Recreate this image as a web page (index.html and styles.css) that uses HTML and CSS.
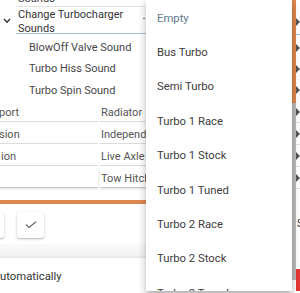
FILE: index.html
```html
<!DOCTYPE html>
<html>
<head>
<meta charset="utf-8">
<link rel="stylesheet" href="styles.css">
</head>
<body>
<div class="app">
  <div class="main">
    <div class="tree">
      <div class="prev">Sounds</div>
      <div class="group">
        <div class="chev"><svg width="8" height="6" viewBox="0 0 8 6"><polyline points="1,1 4,4.2 7,1" fill="none" stroke="#333" stroke-width="1.4"/></svg></div>
        <div class="glabel"><span class="gtext">Change Turbocharger<br>Sounds</span><span class="gdot"></span></div>
      </div>
      <div class="children">
        <div class="child">BlowOff Valve Sound</div>
        <div class="child">Turbo Hiss Sound</div>
        <div class="child">Turbo Spin Sound</div>
      </div>
    </div>
    <div class="table">
      <div class="cell c1">port</div><div class="cell c2">Radiator</div>
      <div class="cell c1">sion</div><div class="cell c2">Independent</div>
      <div class="cell c1 c1b">ion</div><div class="cell c2">Live Axle</div>
      <div class="cell c1"></div><div class="cell c2">Tow Hitch</div>
    </div>
    <div class="obar"></div>
    <div class="btns">
      <div class="btn"></div>
      <div class="btn"><svg width="12" height="8" viewBox="0 0 12 8"><polyline points="1,3.5 4,6.5 11,0.8" fill="none" stroke="#666" stroke-width="1.1"/></svg></div>
    </div>
    <div class="band"></div>
    <div class="auto">utomatically</div>
  </div>
  <div class="vbar"><div class="vtop"></div><div class="vbot"></div></div>
  <div class="strip">
    <div class="s-top"></div>
    <div class="s-group"><span class="tri"></span></div>
    <div class="s-gap"></div>
    <div class="s-child"><span class="tri"></span></div>
    <div class="s-child"><span class="tri"></span></div>
    <div class="s-child"><span class="tri"></span></div>
    <div class="s-tab"><span class="tri"></span></div>
    <div class="s-tab"><span class="tri"></span></div>
    <div class="s-tab"><span class="tri"></span></div>
    <div class="s-tab"><span class="tri"></span></div>
    <div class="s-letter">S</div>
    <div class="s-red"></div>
  </div>
</div>
<div class="menu">
  <div class="item empty">Empty</div>
  <div class="item">Bus Turbo</div>
  <div class="item">Semi Turbo</div>
  <div class="item">Turbo 1 Race</div>
  <div class="item">Turbo 1 Stock</div>
  <div class="item">Turbo 1 Tuned</div>
  <div class="item">Turbo 2 Race</div>
  <div class="item">Turbo 2 Stock</div>
  <div class="item">Turbo 2 Tuned</div>
</div>
</body>
</html>
```
FILE: styles.css
```css
* { box-sizing: border-box; margin: 0; padding: 0; }
html, body { width: 300px; height: 293px; overflow: hidden; background: #fff; }
body { font-family: Roboto, "Noto Sans", sans-serif; color: #444; position: relative; }

.app { display: flex; height: 293px; }
.main { width: 292px; flex: none; display: flex; flex-direction: column; }

.tree { font-size: 11px; }
.prev { margin-top: -14px; height: 21px; padding-top: 6px; line-height: 14px; margin-left: 16px; padding-left: 2px; border-bottom: 1px solid #e2e2e2; color: #444; }
.group { display: flex; height: 27px; }
.chev { width: 16px; flex: none; display: flex; align-items: center; padding-left: 3px; }
.glabel { flex: 1; display: flex; border-bottom: 1px solid #a3c1df; padding-top: 1px; padding-left: 2px; line-height: 14px; color: #333; }
.gtext { width: 125px; flex: none; }
.gdot { width: 2px; height: 1px; background: #777; align-self: center; margin-top: -4px; }
.children { margin-top: 3px; }
.child { height: 21.4px; line-height: 21.4px; padding-left: 29px; color: #474747; }

.table { margin-top: -1px; display: grid; grid-template-columns: 98px 1fr; column-gap: 2px; font-size: 11px; color: #555; }
.cell { height: 22px; padding-top: 4px; line-height: 17px; border-bottom: 1px solid #dcdcdc; white-space: nowrap; overflow: hidden; }
.c1 { text-indent: -1px; }
.c1b { text-indent: 1px; }
.c2 { padding-left: 1px; }
.table .cell:nth-last-child(-n+2) { border-bottom-color: #c8c8c8; box-shadow: 0 1px 2px rgba(0,0,0,0.12); }

.obar { margin-top: 12px; height: 5px; background: #e0874f; }
.btns { margin-top: 8px; margin-left: -23px; display: flex; gap: 13px; }
.btn { width: 27px; height: 26px; background: #fff; border-radius: 3px; box-shadow: 0 1px 3px rgba(0,0,0,0.22), 0 1px 1px rgba(0,0,0,0.1); display: flex; align-items: center; justify-content: center; }
.band { margin-top: 6px; height: 17px; background: linear-gradient(#fafafa, #f1f1f1); }
.auto { height: 40px; padding-top: 11px; line-height: 16px; font-size: 11.3px; color: #333; background: #fff; box-shadow: 0 -1px 2px rgba(0,0,0,0.06); }

.vbar { width: 4px; flex: none; display: flex; flex-direction: column; }
.vtop { height: 103px; background: #e0874f; }
.vbot { height: 177px; background: #bcbcbc; }

.strip { width: 4px; flex: none; display: flex; flex-direction: column; overflow: hidden; }
.s-top { height: 7px; }
.s-group { height: 28px; display: flex; align-items: center; padding-top: 2px; border-bottom: 1px solid #a3c1df; }
.s-gap { height: 2px; }
.s-child { height: 21.4px; display: flex; align-items: center; }
.s-tab { height: 22px; display: flex; align-items: center; border-bottom: 1px solid #e4e4e4; }
.s-tab:first-of-type { margin-top: -1px; }
.tri { width: 0; height: 0; border-top: 4px solid transparent; border-bottom: 4px solid transparent; border-left: 4px solid #555; }
.s-letter { margin-top: 28px; height: 14px; line-height: 14px; font-size: 11px; color: #333; padding-left: 1px; }
.s-red { margin-top: 38px; height: 22px; background: #e53935; }

.menu { position: absolute; left: 146px; top: 0; width: 146px; height: 291px; background: #fff; overflow: hidden; padding-top: 1px; box-shadow: 0 3px 4px -2px rgba(0,0,0,0.2), 0 5px 7px 1px rgba(0,0,0,0.12), 0 2px 8px 1px rgba(0,0,0,0.1); }
.item { height: 34.4px; display: flex; align-items: center; padding-left: 11px; font-size: 11.3px; color: #3d3d3d; white-space: nowrap; }
.item.empty { color: #5e7c8d; }
```
